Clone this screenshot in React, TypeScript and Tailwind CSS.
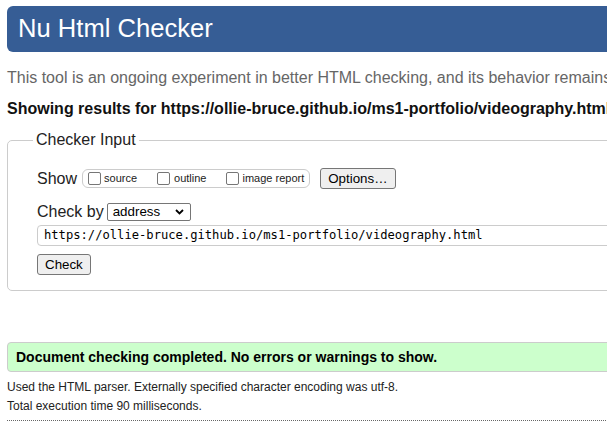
export default function App() {
  const url = "https://ollie-bruce.github.io/ms1-portfolio/videography.html";

  return (
    <div className="h-[426px] w-[607px] overflow-hidden bg-white font-['Liberation_Sans',Arial,sans-serif] text-[#222]">
      <div className="w-[1000px] pl-[7px] pt-[6px]">
        <h1 className="flex h-[46px] items-center rounded-[6px] bg-[#365d95] pl-[11px] text-[25.6px] leading-none font-normal text-white">
          Nu Html Checker
        </h1>

        <p className="mt-[16px] text-[16px] leading-[20px] text-[#666]">
          This tool is an ongoing experiment in better HTML checking, and its behavior remains open to change.
        </p>
        <p className="mt-[11px] text-[16px] leading-[20px] font-bold text-[#111]">
          Showing results for {url}
        </p>

        <fieldset className="mt-[12px] h-[160px] rounded-[5px] border border-[#ccc] px-[25px]">
          <legend className="px-[3px] text-[16px] leading-[18px]">Checker Input</legend>

          <div className="mt-[19px] flex items-center pl-[4px]">
            <span className="text-[16px] leading-[20px]">Show</span>
            <div className="ml-[5px] flex h-[19px] items-center rounded-[6px] border border-[#ccc] pr-[5px] pl-[5px] text-[11px]">
              <Box />
              <span className="ml-[3px] mr-[20px]">source</span>
              <Box />
              <span className="ml-[4px] mr-[20px]">outline</span>
              <Box />
              <span className="ml-[3px]">image report</span>
            </div>
            <button className="ml-[10px] h-[21px] rounded-[3px] border border-[#767676] bg-[#efefef] px-[7px] text-[13.33px] leading-none text-black">
              Options…
            </button>
          </div>

          <div className="mt-[13px] flex items-center pl-[4px]">
            <span className="text-[16px] leading-[20px]">Check by</span>
            <div className="ml-[3px] flex h-[18px] w-[84px] items-center justify-between rounded-[2px] border border-[#767676] pr-[6px] pl-[5px] text-[13.33px] text-black">
              <span>address</span>
              <svg width="9" height="6" viewBox="0 0 9 6" fill="none">
                <path d="M1 1l3.5 3.5L8 1" stroke="#000" strokeWidth="1.8" />
              </svg>
            </div>
          </div>

          <div className="mt-[3px] ml-[4px] flex h-[21px] items-center rounded-l-[4px] border border-[#ccc] pl-[6px] font-['DejaVu_Sans_Mono',monospace] text-[12.15px] text-black">
            {url}
          </div>

          <button className="mt-[8px] ml-[4px] h-[21px] rounded-[3px] border border-[#767676] bg-[#efefef] px-[7px] text-[13.33px] leading-none text-black">
            Check
          </button>
        </fieldset>

        <div className="mt-[51px] flex h-[30px] items-center rounded-l-[4px] border border-[#ccc] bg-[#ccffcc] pl-[8px] text-[14px] font-bold text-black">
          Document checking completed. No errors or warnings to show.
        </div>

        <p className="mt-[6px] text-[12px] leading-[19px] text-[#222]">
          Used the HTML parser. Externally specified character encoding was utf-8.
        </p>
        <p className="text-[12px] leading-[19px] text-[#222]">Total execution time 90 milliseconds.</p>
        <div className="mt-[4px] w-full border-b border-dotted border-[#666]" />
      </div>
    </div>
  );
}

function Box() {
  return <span className="block h-[13px] w-[13px] rounded-[2px] border border-[#767676] bg-white" />;
}
